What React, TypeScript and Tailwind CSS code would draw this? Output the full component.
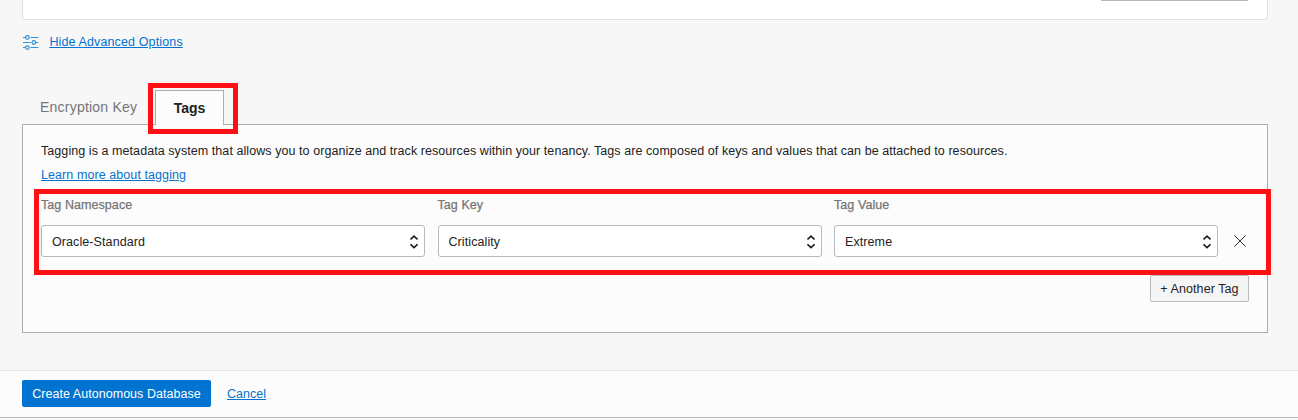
function SlidersIcon() {
  return (
    <svg width="16" height="17" viewBox="0 0 16 17" fill="none" stroke="#3290d8" strokeWidth="1.2" className="block">
      <path d="M0 3.5h2.3M7.5 3.5H15.3M0 8.5h7.5M13 8.5h2.3M0 13.5h2.3M7.5 13.5H15.3" />
      <circle cx="4.4" cy="3.4" r="1.8" />
      <circle cx="10.8" cy="8.5" r="1.8" />
      <circle cx="4.4" cy="13.6" r="1.8" />
    </svg>
  );
}

function Stepper() {
  return (
    <svg width="8" height="14" viewBox="0 0 8 14" fill="none" stroke="#1d1d1d" strokeWidth="1.6" className="block">
      <path d="M0.5 4.5 4 1.2 7.5 4.5M0.5 9.3 4 12.6 7.5 9.3" />
    </svg>
  );
}

function SelectField({ label, value }: { label: string; value: string }) {
  return (
    <div className="w-[384px]">
      <div className="h-[28px] text-[12.5px] leading-[16px] tracking-[0.07px] text-[#757575] [-webkit-text-stroke:0.25px_#757575]">{label}</div>
      <button className="flex h-[32px] w-full items-center justify-between rounded-[3px] border border-[#b5bac1] bg-white pt-px pr-[6px] pl-[10px] text-[12.5px] tracking-[0.09px] text-[#222]">
        <span className="pt-px leading-[16px]">{value}</span>
        <Stepper />
      </button>
    </div>
  );
}

export default function App() {
  return (
    <div className="flex h-[420px] w-[1298px] flex-col overflow-hidden bg-[#f7f7f7] font-['Liberation_Sans',Arial,sans-serif] text-[12.5px] text-[#222]">
      <div className="ml-[22px] flex h-[20px] w-[1246px] justify-end rounded-b-[3px] border border-t-0 border-[#e0e0e0] bg-white pr-[19px]">
        <div className="h-px w-[147px] bg-[#b4b7c2]" />
      </div>

      <div className="flex h-[70px] items-start pt-[14px] pl-[23px]">
        <SlidersIcon />
        <a className="ml-[10.4px] leading-[16px] tracking-[0.13px] text-[#0572ce] underline underline-offset-[1px]">Hide Advanced Options</a>
      </div>

      <div className="flex h-[34px] pl-[40px]">
        <div className="w-[115px] pt-[9px] text-[14px] leading-[16px] tracking-[0.22px] text-[#757575]">Encryption Key</div>
        <div className="relative z-10 h-[35px] w-[69px] border border-b-0 border-[#adadad] bg-[#fcfcfc] pt-[9px] text-center text-[14px] leading-[16px] font-bold text-[#222]">
          Tags
          <div className="absolute -top-[8px] -left-[8px] h-[51px] w-[90px] border-[5px] border-[#ff1014]" />
        </div>
      </div>

      <div className="relative ml-[22px] h-[209px] w-[1246px] border border-[#adadad] bg-[#fcfcfc] pt-[18px] pl-[18px]">
        <p className="leading-[16px] tracking-[0.068px]">
          Tagging is a metadata system that allows you to organize and track resources within your tenancy. Tags are composed of keys and values that can be attached to resources.
        </p>
        <a className="mt-[8px] block leading-[16px] tracking-[0.08px] text-[#0572ce] underline underline-offset-[1px]">Learn more about tagging</a>
        <div className="mt-[14px] flex gap-[12.5px]">
          <SelectField label="Tag Namespace" value="Oracle-Standard" />
          <SelectField label="Tag Key" value="Criticality" />
          <SelectField label="Tag Value" value="Extreme" />
          <svg width="12" height="12" viewBox="0 0 12 12" stroke="#333" strokeWidth="1" className="mt-[38px] ml-[3px]">
            <path d="M0.3 0.3 11.7 11.7M11.7 0.3 0.3 11.7" />
          </svg>
        </div>
        <div className="mt-[18px] flex justify-end pr-[18px]">
          <button className="flex h-[27px] w-[99px] items-center justify-center rounded-[2px] border border-[#b9bcc2] bg-[#f5f5f5] pt-px leading-[16px] tracking-[0.08px]">+ Another Tag</button>
        </div>
        <div className="absolute top-[64px] left-[11px] h-[86px] w-[1237px] border-[5px] border-[#ff1014]" />
      </div>

      <div className="mt-[37px] flex h-[48px] shrink-0 items-start border-t border-b border-t-[#e4e4e4] border-b-[#b5b5b5] bg-[#fcfcfc] pt-[9px] pl-[22px]">
        <button className="flex h-[27px] w-[189px] items-center justify-center rounded-[2px] bg-[#0074d0] pt-px leading-[16px] tracking-[0.04px] text-white">Create Autonomous Database</button>
        <a className="ml-[16px] leading-[28px] tracking-[0.04px] text-[#0572ce] underline underline-offset-[1px]">Cancel</a>
      </div>
      <div className="h-[2px] shrink-0 bg-[#fafafa]" />
    </div>
  );
}
